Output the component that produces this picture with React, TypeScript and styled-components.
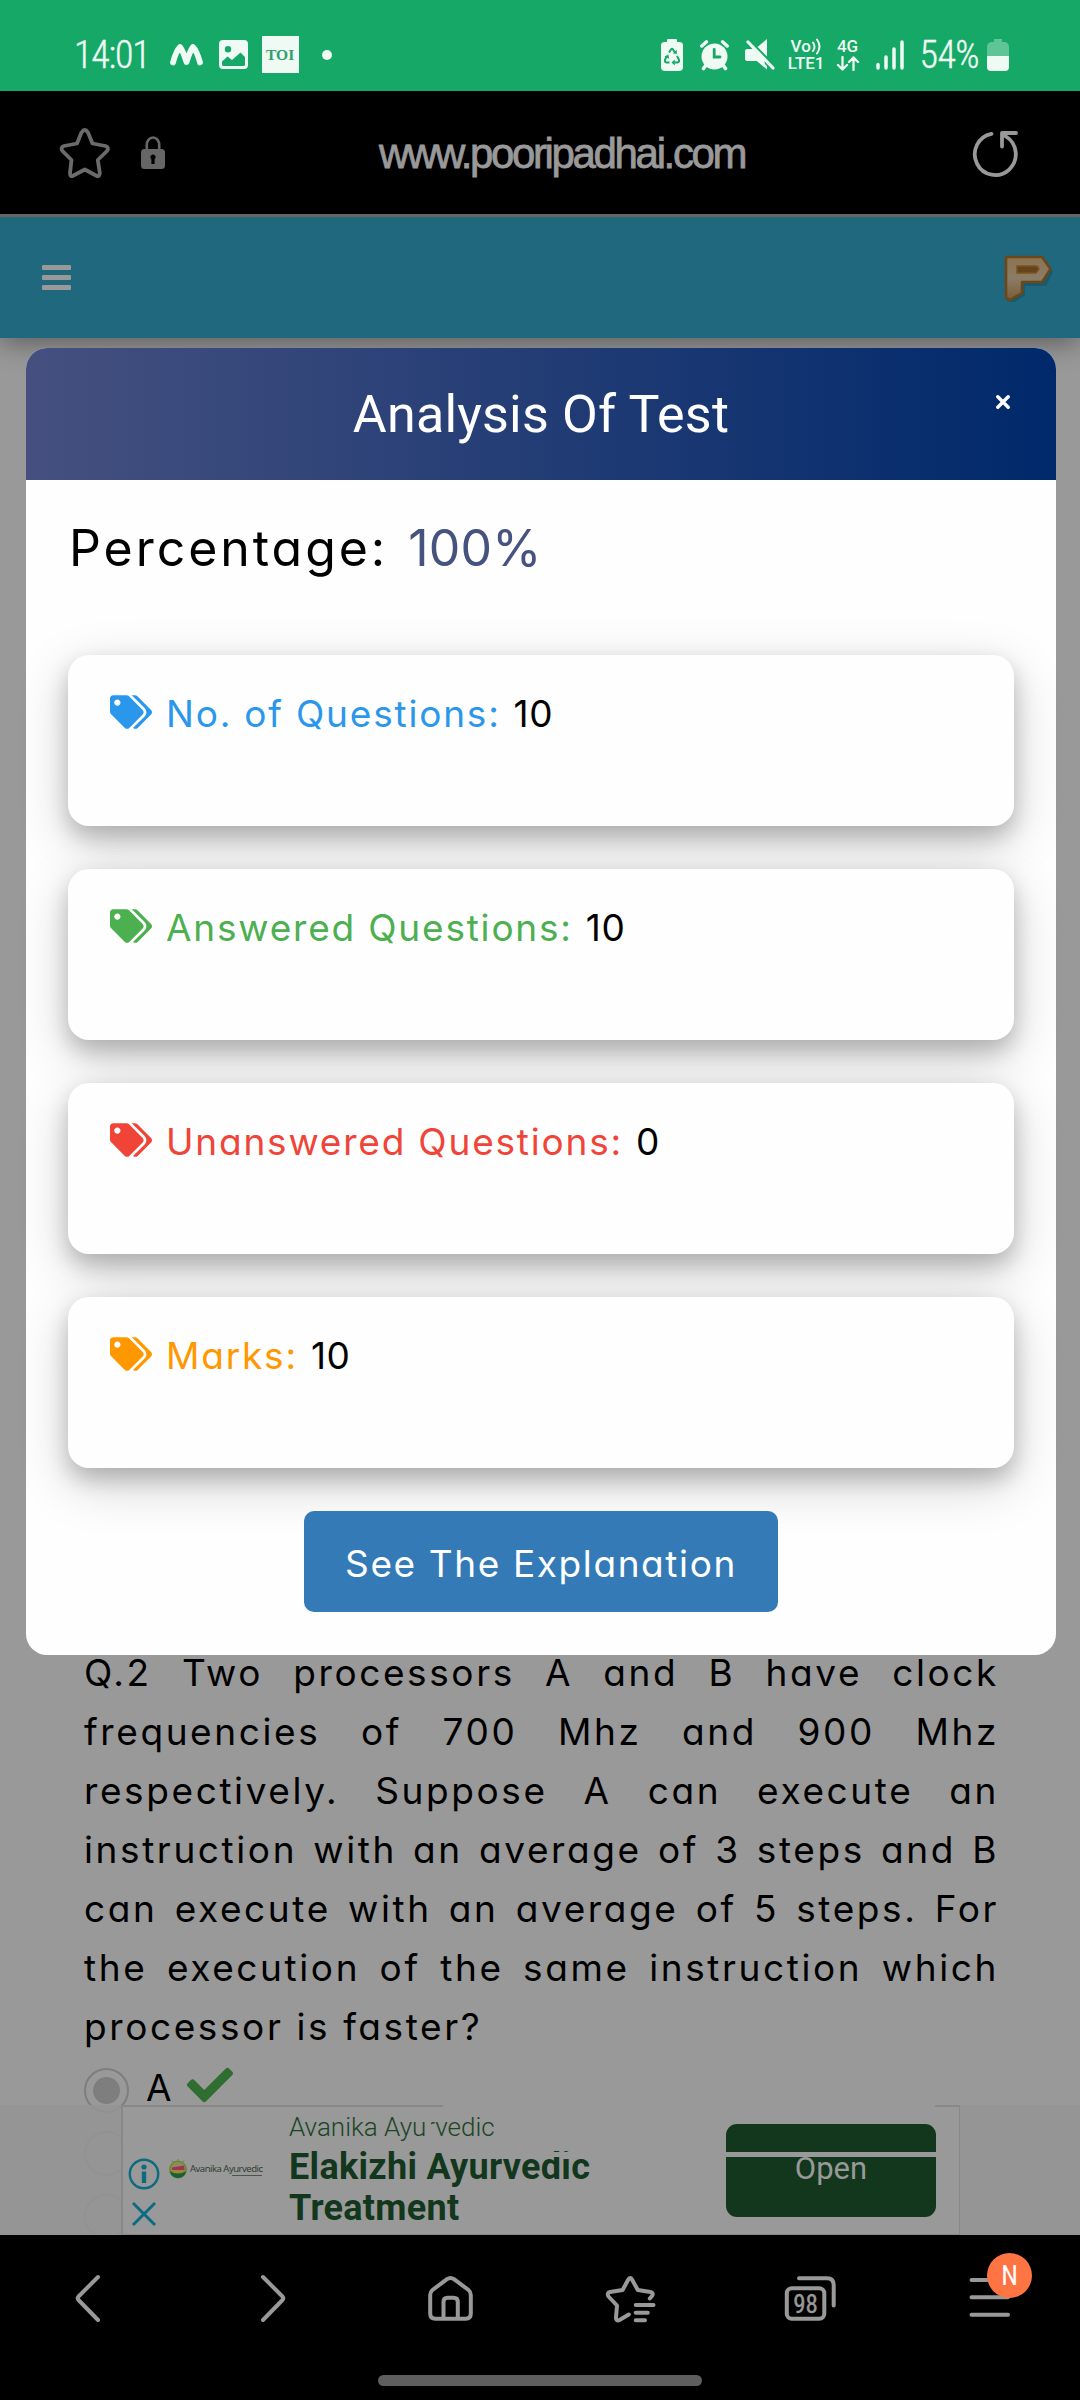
import React from "react";
import styled, { createGlobalStyle } from "styled-components";
import { FaTags, FaCheck } from "react-icons/fa";

const Global = createGlobalStyle`
  * { box-sizing: border-box; }
  html, body { margin: 0; padding: 0; background: #000; }
  body { font-family: Roboto, "Liberation Sans", sans-serif; }
  svg { display: block; flex: none; }
`;

const handFont = `
  font-family: Inter, Lato, sans-serif;
  font-feature-settings: "cv11";
`;

const Screen = styled.div`
  width: 1080px;
  height: 2400px;
  display: flex;
  flex-direction: column;
  overflow: hidden;
`;

/* ---------- system status bar ---------- */

const StatusBar = styled.div`
  height: 91px;
  padding: 18px 71px 0 74px;
  display: flex;
  justify-content: space-between;
  align-items: center;
  background: #16a866;
  color: #eefaf3;
`;

const StatusGroup = styled.div`
  display: flex;
  align-items: center;
`;

const StatusText = styled.span<{ $spacing: number }>`
  font-family: "Roboto Condensed", Roboto, sans-serif;
  font-weight: 300;
  font-size: 38px;
  line-height: 40px;
  letter-spacing: ${(p) => p.$spacing}px;
  -webkit-text-stroke: 0.4px #eefaf3;
`;

const TimesBadge = styled.span`
  width: 37px;
  height: 37px;
  margin: 0 23px 0 14px;
  display: flex;
  align-items: center;
  justify-content: center;
  background: #eefaf3;
  color: #2f9f6c;
  font: 700 15.5px/37px "Liberation Serif", serif;
`;

const Dot = styled.span`
  width: 10px;
  height: 10px;
  border-radius: 50%;
  background: #eefaf3;
`;

const Gap = styled.span<{ $w: number }>`
  flex: none;
  width: ${(p) => p.$w}px;
`;

const NetStack = styled.span`
  display: flex;
  flex-direction: column;
  align-items: center;
  font: 500 17px/17px Roboto, sans-serif;
  white-space: nowrap;
`;

const NetLine = styled.span`
  display: flex;
  align-items: center;
  height: 17px;
`;

/* ---------- browser address bar ---------- */

const AddressBar = styled.div`
  height: 126px;
  padding: 0 60px 0 58px;
  display: flex;
  align-items: center;
  background: #000;
  border-bottom: 3px solid #666;
`;

const Address = styled.div`
  flex: 1;
  padding: 2px 0 0 10px;
  text-align: left;
  color: #999;
  font: 42px/50px "Liberation Sans", sans-serif;
  letter-spacing: -2.35px;
  -webkit-text-stroke: 0.8px #999;
`;

/* ---------- web page ---------- */

const Viewport = styled.div`
  position: relative;
  height: 2018px;
  display: flex;
  flex-direction: column;
  overflow: hidden;
  background: #999;
`;

const SiteHeader = styled.header`
  flex: none;
  height: 121px;
  padding: 0 27px 0 42px;
  display: flex;
  align-items: center;
  justify-content: space-between;
  background: #1f687d;
  box-shadow: 0 5px 26px rgba(0, 0, 0, 0.4);
`;

const Burger = styled.div`
  display: grid;
  gap: 4.6px;
  width: 29px;
`;

const BurgerBar = styled.span`
  height: 5px;
  border-radius: 1px;
  background: #999;
`;

const Quiz = styled.main`
  ${handFont}
  margin-top: 1305px;
  padding: 0 81px 0 84px;
  color: #000;
  font-size: 37px;
  line-height: 59px;
`;

const Question = styled.p`
  margin: 0;
  text-align: justify;
  letter-spacing: 2.6px;
`;

const Option = styled.div`
  height: 63px;
  display: flex;
  align-items: center;

  svg {
    margin-bottom: 5px;
  }
`;

const Radio = styled.span<{ $on?: boolean }>`
  flex: none;
  width: 45px;
  height: 45px;
  margin: 6px 17px 0 0;
  display: flex;
  align-items: center;
  justify-content: center;
  border: 2.5px solid ${(p) => (p.$on ? "#7e7e7e" : "#808080")};
  border-radius: 50%;

  &::after {
    content: "";
    width: 27px;
    height: 27px;
    border-radius: 50%;
    background: ${(p) => (p.$on ? "#7e7e7e" : "transparent")};
  }
`;

const OptionLabel = styled.span`
  margin-right: 15px;
`;

/* ---------- result dialog ---------- */

const Dialog = styled.section`
  position: absolute;
  top: 131px;
  left: 26px;
  width: 1030px;
  height: 1307px;
  border-radius: 21px;
  background: #fefefe;
`;

const DialogHeader = styled.div`
  position: relative;
  height: 132px;
  border-radius: 21px 21px 0 0;
  background: linear-gradient(to right, #45507f, #00296b);
  color: #fff;
`;

const DialogTitle = styled.h2`
  margin: 0;
  text-align: center;
  font: 400 52px/133px Roboto, sans-serif;
  letter-spacing: 0.2px;
`;

const CloseButton = styled.button`
  position: absolute;
  top: 43px;
  right: 42px;
  width: 22px;
  height: 22px;
  padding: 4px;
  border: 0;
  background: none;
`;

const DialogBody = styled.div`
  ${handFont}
  padding: 38px 42px 0;
  display: flex;
  flex-direction: column;
`;

const Percentage = styled.div`
  margin: 0 0 77px 1px;
  display: flex;
  gap: 20px;
  font-size: 50px;
  line-height: 60px;
  letter-spacing: 2.95px;
  color: #000;
`;

const PercentValue = styled.span`
  color: #46527f;
  letter-spacing: 0.2px;
`;

const Cards = styled.div`
  display: grid;
  gap: 43px;
`;

const Card = styled.div<{ $tint: string }>`
  height: 171px;
  padding: 36px 42px 0;
  display: flex;
  align-items: flex-start;
  border-radius: 21px;
  background: #fefefe;
  box-shadow: 0 10.5px 21px rgba(0, 0, 0, 0.2), 0 15.8px 52.5px rgba(0, 0, 0, 0.19);
  color: ${(p) => p.$tint};
  font-size: 37px;
  line-height: 45px;

  svg {
    width: 42px;
    height: 34px;
    margin: 4px 14px 0 0;
  }
`;

const CardLabel = styled.span`
  letter-spacing: 1.8px;
`;

const CardValue = styled.span`
  margin-left: 13px;
  color: #000;
  letter-spacing: 0.6px;
`;

const ExplainButton = styled.button`
  ${handFont}
  align-self: center;
  width: 474px;
  height: 101px;
  margin-top: 43px;
  padding: 4px 0 0;
  border: 0;
  border-radius: 10px;
  background: #337ab7;
  color: #fff;
  font-size: 37px;
  letter-spacing: 1.6px;
`;

/* ---------- ad banner ---------- */

const AdStrip = styled.aside`
  position: absolute;
  left: 0;
  bottom: 0;
  width: 1080px;
  height: 130px;
  padding: 0 120px 0 121px;
  background: rgba(148, 148, 148, 0.88);
`;

const AdBox = styled.div`
  position: relative;
  height: 130px;
  display: flex;
  border: solid #888;
  border-width: 0 1.5px 1px 2px;
  background: #999;
`;

const AdTopEdge = styled.span<{ $from: number; $w: number }>`
  position: absolute;
  top: 0;
  left: ${(p) => p.$from}px;
  width: ${(p) => p.$w}px;
  height: 2px;
  background: #888;
`;

const AdControls = styled.div`
  width: 41px;
  padding-top: 53px;
  display: flex;
  flex-direction: column;
  align-items: center;
  gap: 11px;
`;

const AdBrand = styled.div`
  width: 125px;
  padding: 54px 0 0 4px;
  display: flex;
  align-items: flex-start;
  gap: 2px;
`;

const AdBrandName = styled.div`
  padding-top: 3px;
  display: flex;
  flex-direction: column;
  align-items: flex-end;
  color: #2b3a2d;
  font: 9.6px/13px "Open Sans", sans-serif;
  letter-spacing: -0.5px;
  white-space: nowrap;

  &::after {
    content: "";
    width: 30px;
    height: 1px;
    margin-right: 1px;
    background: #4c554c;
  }
`;

const AdCopy = styled.div`
  flex: 1;
  padding-top: 7px;
  white-space: nowrap;
`;

const Advertiser = styled.div`
  margin-bottom: 4px;
  color: #1c4526;
  font: 300 26px/31px Roboto, sans-serif;
`;

const Headline = styled.div`
  color: #12371c;
  font: 700 36px/41px Roboto, sans-serif;
  letter-spacing: 0.3px;
`;

const OpenButton = styled.div`
  width: 210px;
  height: 93px;
  margin: 19px 23px 0 0;
  padding-top: 10px;
  border-radius: 11px;
  background: #12371c;
  color: #999;
  text-align: center;
  font: 400 31px/70px Roboto, sans-serif;
`;

const Scratch = styled.span<{ $x: number; $y: number; $w: number; $h: number }>`
  position: absolute;
  left: ${(p) => p.$x}px;
  top: ${(p) => p.$y}px;
  width: ${(p) => p.$w}px;
  height: ${(p) => p.$h}px;
  background: #999;
`;

/* ---------- browser toolbar ---------- */

const Toolbar = styled.nav`
  height: 165px;
  padding-top: 33px;
  display: flex;
  flex-direction: column;
  align-items: center;
  gap: 47px;
  background: #000;
`;

const ToolRow = styled.div`
  display: grid;
  grid-template-columns: repeat(6, 180px);
  justify-items: center;
`;

const Tool = styled.div`
  position: relative;
  width: 60px;
  height: 60px;
`;

const Badge = styled.span`
  position: absolute;
  left: 27px;
  top: -15px;
  width: 45px;
  height: 45px;
  border-radius: 50%;
  background: #ff7443;
  color: #fff;
  text-align: center;
  font: 400 27px/46px "Roboto Condensed", Roboto, sans-serif;
`;

const GestureBar = styled.div`
  width: 324px;
  height: 11px;
  border-radius: 6px;
  background: #5e5e5e;
`;

const line = {
  fill: "none",
  stroke: "#999",
  strokeWidth: 4,
  strokeLinecap: "round" as const,
  strokeLinejoin: "round" as const,
};

const ToolIcon = ({ children }: { children: React.ReactNode }) => (
  <svg width="60" height="60" viewBox="0 0 60 60" {...line}>
    {children}
  </svg>
);

const cards = [
  { label: "No. of Questions:", value: "10", tint: "#2b97ec" },
  { label: "Answered Questions:", value: "10", tint: "#4caf50" },
  { label: "Unanswered Questions:", value: "0", tint: "#f04438" },
  { label: "Marks:", value: "10", tint: "#ff9800" },
];

const Status = () => (
  <StatusBar>
    <StatusGroup>
      <StatusText $spacing={-1.2}>14:01</StatusText>
      <Gap $w={20} />
      <svg width="33" height="24" viewBox="0 0 33 24">
        <path
          d="M3 19.5 C5 12 7 7 10 4 C13 8 14.5 13 16.5 19 C18.500 13 20 8 23 4 C26 7 28 12 30 19.5"
          fill="none"
          stroke="#eefaf3"
          strokeWidth="5.800"
          strokeLinecap="round"
          strokeLinejoin="round"
        />
      </svg>
      <Gap $w={16} />
      <svg width="29" height="29" viewBox="0 0 29 29">
        <path
          fill="#eefaf3"
          fillRule="evenodd"
          d="M4 0H25A4 4 0 0 1 29 4V25A4 4 0 0 1 25 29H4A4 4 0 0 1 0 25V4A4 4 0 0 1 4 0ZM9 6A3.200 3.200 0 1 0 9 12.400A3.200 3.200 0 1 0 9 6ZM3 21.500V24.500Q3 26 4.500 26H24.500Q26 26 26 24.500V17L21.500 12.500L13 20L8.500 16.500Z"
        />
      </svg>
      <TimesBadge>TOI</TimesBadge>
      <Dot />
    </StatusGroup>
    <StatusGroup>
      <svg width="22" height="32" viewBox="0 0 22 32">
        <path fill="#eefaf3" d="M7 0H15Q16 0 16 1V3H18.500Q22 3 22 6.500V28Q22 32 18 32H4Q0 32 0 28V6.500Q0 3 3.500 3H6V1Q6 0 7 0Z" />
        <path
          d="M8 13.500L10 10.500Q11 9 12 10.500L14 13.500M16 17L18 20.800Q18.600 23 16.500 23.500H13.500M8.500 23.500H5.500Q3.400 23 4 20.800L6 17"
          fill="none"
          stroke="#16a866"
          strokeWidth="2"
        />
        <path fill="#16a866" d="M11.800 14.500L16 14.800L15.600 10.800ZM13.800 20.500V26.500L10.500 23.500ZM3.500 17.800L7.400 15.600L8.200 19.800Z" />
      </svg>
      <Gap $w={17} />
      <svg width="29" height="32" viewBox="0 0 29 32" stroke="#eefaf3" strokeLinecap="round">
        <circle cx="14.500" cy="17.500" r="13" fill="#eefaf3" stroke="none" />
        <path d="M1.800 7L6.500 2.800M27.200 7L22.500 2.800" strokeWidth="3.400" />
        <path d="M6 26L3.500 29.500M23 26L25.500 29.500" strokeWidth="3.600" />
        <path d="M14.200 10.500V18H20" fill="none" stroke="#16a866" strokeWidth="2.800" />
      </svg>
      <Gap $w={15.5} />
      <svg width="30" height="31" viewBox="0 0 30 31">
        <path d="M3 10H9L22 24V30.500L12 22H3Q0 22 0 19V13Q0 10 3 10Z" fill="#eefaf3" />
        <path d="M12.500 8L22 0V17.500Z" fill="#eefaf3" />
        <path d="M2.500 2.500L28 29" stroke="#16a866" strokeWidth="6" />
        <path d="M3 3L28 29" stroke="#eefaf3" strokeWidth="3.200" strokeLinecap="round" />
        <path d="M3 10H8L19.500 21.500L20 28.500L12 22H3Q0 22 0 19V13Q0 10 3 10Z" fill="#eefaf3" />
      </svg>
      <Gap $w={13} />
      <NetStack>
        <NetLine>
          Vo
          <svg width="11" height="17" viewBox="0 0 11 17" fill="none" stroke="#eefaf3" strokeWidth="2" strokeLinecap="round">
            <path d="M2 4.500Q5 8.500 2 13M6 1.500Q11 8.500 6 15.500" />
          </svg>
        </NetLine>
        <NetLine>LTE1</NetLine>
      </NetStack>
      <Gap $w={11} />
      <NetStack>
        <NetLine>4G</NetLine>
        <NetLine>
          <svg width="24" height="15" viewBox="0 0 24 15" fill="none" stroke="#eefaf3" strokeWidth="2.300" strokeLinecap="round" strokeLinejoin="round">
            <path d="M6.500 1V13.500M2 9L6.500 13.500L11 9M17.500 14V1.500M13 6L17.500 1.500L22 6" />
          </svg>
        </NetLine>
      </NetStack>
      <Gap $w={16} />
      <svg width="28" height="30" viewBox="0 0 28 30" stroke="#eefaf3" strokeWidth="3.500" strokeLinecap="round">
        <path d="M2 24.500V28M10 17V28M18 9V28M26 2V28" />
      </svg>
      <Gap $w={16} />
      <StatusText $spacing={-0.6}>54%</StatusText>
      <Gap $w={8} />
      <svg width="22" height="32" viewBox="0 0 22 32">
        <path fill="#5fc596" d="M7 0H15V3H18Q22 4 22 8V17H0V8Q0 4 4 3H7Z" />
        <path fill="#eefaf3" d="M0 17H22V28Q22 32 18 32H4Q0 32 0 28Z" />
      </svg>
    </StatusGroup>
  </StatusBar>
);

const BrowserHeader = () => (
  <AddressBar>
    <svg width="54" height="54" viewBox="0 0 54 54" {...line} stroke="#6b6b6b" strokeWidth="3.800">
      <path d="M23.500 6.500Q26.800 1.500 30 6.500L34.500 17.500L47.500 20Q51.500 21.500 49 25L39.800 34L41.800 47Q41.500 51.500 38 49.500L26.800 43.500L15.500 49.500Q12 51.500 12 47L13.500 34L4.500 25Q2 21.500 6 20L19 17.500Z" />
    </svg>
    <Gap $w={29} />
    <svg width="24" height="34" viewBox="0 0 24 34">
      <path d="M5.800 14V9A6.200 7.500 0 0 1 18.200 9V14" fill="none" stroke="#666" strokeWidth="2.600" />
      <path
        fill="#666"
        fillRule="evenodd"
        d="M3.500 13H20.500Q24 13 24 16.500V29.500Q24 33 20.500 33H3.500Q0 33 0 29.500V16.500Q0 13 3.500 13ZM12 18.500A2.600 2.600 0 0 0 10.400 23.200V28H13.600V23.200A2.600 2.600 0 0 0 12 18.500Z"
      />
    </svg>
    <Gap $w={204} />
    <Address>www.pooripadhai.com</Address>
    <svg width="50" height="50" viewBox="0 0 50 50" {...line} strokeWidth="3.800">
      <path d="M21.500 5.800A20.500 20.800 0 1 0 36 8.500L32.500 5.500M32 18.500V5H46" />
    </svg>
  </AddressBar>
);

const SiteLogo = () => (
  <svg width="50" height="48" viewBox="0 0 50 48">
    <defs>
      <linearGradient id="wood" x1="0" y1="0" x2="0" y2="1">
        <stop offset="0" stopColor="#8c7350" />
        <stop offset="0.500" stopColor="#8a7c67" />
        <stop offset="1" stopColor="#7a5c38" />
      </linearGradient>
    </defs>
    <path d="M4 6H42L50 18L43 32H22V41L10 49L4 47Z" fill="#174c5b" opacity="0.500" />
    <path
      d="M3 3H39L47.500 15L39 28H19V39L7 46L3 44Z"
      fill="url(#wood)"
      stroke="#6c4719"
      strokeWidth="2.600"
      strokeLinejoin="round"
    />
    <path d="M14 12H34L36 15L33 19H14Z" fill="#66431b" stroke="#7c5422" strokeWidth="1.500" />
  </svg>
);

const ResultDialog = () => (
  <Dialog>
    <DialogHeader>
      <DialogTitle>Analysis Of Test</DialogTitle>
      <CloseButton aria-label="Close">
        <svg width="14" height="14" viewBox="0 0 14 14" stroke="#fff" strokeWidth="3.400" strokeLinecap="round">
          <path d="M1.800 1.800L12.200 12.200M12.200 1.800L1.800 12.200" />
        </svg>
      </CloseButton>
    </DialogHeader>
    <DialogBody>
      <Percentage>
        <span>Percentage:</span>
        <PercentValue>100%</PercentValue>
      </Percentage>
      <Cards>
        {cards.map((c) => (
          <Card key={c.label} $tint={c.tint}>
            <FaTags />
            <CardLabel>{c.label}</CardLabel>
            <CardValue>{c.value}</CardValue>
          </Card>
        ))}
      </Cards>
      <ExplainButton>See The Explanation</ExplainButton>
    </DialogBody>
  </Dialog>
);

const AdBanner = () => (
  <AdStrip>
    <AdBox>
      <AdTopEdge $from={0} $w={320} />
      <AdTopEdge $from={812} $w={25} />
      <AdControls>
        <svg width="32" height="32" viewBox="0 0 32 32">
          <circle cx="16" cy="16" r="14.200" fill="none" stroke="#0b6b80" strokeWidth="2.400" />
          <path d="M13.800 13.500H18.200V25H13.800Z" fill="#0b6b80" />
          <circle cx="16" cy="9" r="2.600" fill="#0b6b80" />
        </svg>
        <svg width="26" height="26" viewBox="0 0 26 26">
          <path d="M2 2L24 24M24 2L2 24" stroke="#0b6b80" strokeWidth="3" />
        </svg>
      </AdControls>
      <AdBrand>
        <svg width="20" height="20" viewBox="0 0 20 20">
          <circle cx="10" cy="10.500" r="8.300" fill="#8f8a58" stroke="#5d8a2c" strokeWidth="1.300" />
          <path d="M2 12Q10 17 18 12Q17 19 10 19Q3 19 2 12Z" fill="#1c5f37" />
          <path d="M4 8.500L16 6.500L16.500 11H4Z" fill="#9c3457" />
          <path d="M4 11.500H17L14 14H6Z" fill="#a5881f" />
          <path d="M4 1.500L5 3M10 0V1.500M16 1.500L15 3" stroke="#5d8a2c" />
        </svg>
        <AdBrandName>Avanika Ayurvedic</AdBrandName>
      </AdBrand>
      <AdCopy>
        <Advertiser>Avanika Ayurvedic</Advertiser>
        <Headline>Elakizhi Ayurvedic</Headline>
        <Headline>Treatment</Headline>
      </AdCopy>
      <OpenButton>Open</OpenButton>
      <Scratch $x={304} $y={12} $w={4} $h={22} />
      <Scratch $x={424} $y={47} $w={390} $h={5} />
    </AdBox>
  </AdStrip>
);

export default function App() {
  return (
    <Screen>
      <Global />
      <Status />
      <BrowserHeader />
      <Viewport>
        <SiteHeader>
          <Burger>
            <BurgerBar />
            <BurgerBar />
            <BurgerBar />
          </Burger>
          <SiteLogo />
        </SiteHeader>
        <Quiz>
          <Question>
            Q.2 Two processors A and B have clock frequencies of 700 Mhz and 900 Mhz respectively. Suppose A can
            execute an instruction with an average of 3 steps and B can execute with an average of 5 steps. For the
            execution of the same instruction which processor is faster?
          </Question>
          <Option>
            <Radio $on />
            <OptionLabel>A</OptionLabel>
            <FaCheck size={46} color="#2f6d31" />
          </Option>
          <Option>
            <Radio />
          </Option>
          <Option>
            <Radio />
          </Option>
        </Quiz>
        <AdBanner />
        <ResultDialog />
      </Viewport>
      <Toolbar>
        <ToolRow>
          <Tool>
            <ToolIcon>
              <path d="M38 9L18.500 28.500Q17 30.200 18.500 32L38 52" />
            </ToolIcon>
          </Tool>
          <Tool>
            <ToolIcon>
              <path d="M23 9L42.500 28.500Q44 30.200 42.500 32L23 52" />
            </ToolIcon>
          </Tool>
          <Tool>
            <ToolIcon>
              <path d="M10.200 27Q10.200 24 12.500 22L27 11.200Q30.500 8.800 34 11.200L48.500 22Q50.800 24 50.800 27V45.500Q50.800 50.800 45.500 50.800H15.500Q10.200 50.800 10.200 45.500ZM23.500 50V34Q23.500 29.800 27.500 29.800H33.500Q37.800 29.800 37.800 34V50" />
            </ToolIcon>
          </Tool>
          <Tool>
            <ToolIcon>
              <path d="M28.800 46.500L19.500 52Q15.800 53.500 16 49.500L17 37.500L8.500 28.500Q6.500 25 10 24L22.600 22L28.300 11.500Q30.200 8.500 32 11.500L37.800 22L50.500 24Q54 25 52 28L49.800 30.500M35.700 37H53.500M35.700 44.700H47.800M35.700 52.300H45" />
            </ToolIcon>
          </Tool>
          <Tool>
            <ToolIcon>
              <rect x="6.800" y="20.200" width="37.500" height="30.500" rx="5" />
              <path d="M19 10.300H47Q53.700 10.300 53.700 17V37.500" />
              <text
                x="25.600"
                y="45.200"
                textAnchor="middle"
                fontFamily="Roboto Condensed, Roboto, sans-serif"
                fontSize="25"
                fill="#999"
                stroke="#999"
                strokeWidth="0.400"
              >
                98
              </text>
            </ToolIcon>
          </Tool>
          <Tool>
            <ToolIcon>
              <path d="M11.500 12H48M11.500 29.300H48M11.500 46.700H48" />
            </ToolIcon>
            <Badge>N</Badge>
          </Tool>
        </ToolRow>
        <GestureBar />
      </Toolbar>
    </Screen>
  );
}
